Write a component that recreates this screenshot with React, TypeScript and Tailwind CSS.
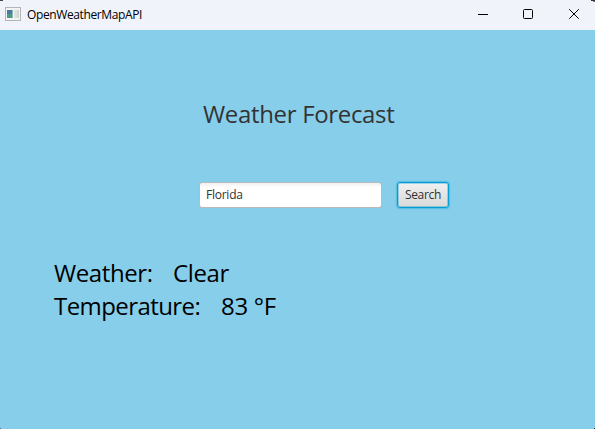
import React from 'react';

function AppIcon() {
  return (
    <svg width="16" height="14" viewBox="0 0 16 14" shapeRendering="crispEdges" className="mb-0.5 ml-[5px]">
      <rect x="0.5" y="0.5" width="15" height="13" fill="#f3f3f3" stroke="#b3b5bb" />
      <rect x="2" y="3" width="5" height="8" fill="#4a7aa0" />
      <rect x="2" y="7" width="5" height="4" fill="#4b9a85" />
      <rect x="7" y="3" width="1" height="8" fill="#8fb9b8" />
      <rect x="9" y="3" width="3" height="8" fill="#e0e2e2" />
      <rect x="12" y="3" width="2" height="8" fill="#d2d4d2" />
    </svg>
  );
}

function TitleBar() {
  return (
    <header className="flex h-[30px] items-center bg-[#f0f3f9]">
      <AppIcon />
      <h1 className="ml-1.5 flex-1 whitespace-nowrap text-[12px] leading-4 tracking-[-0.38px] text-black">OpenWeatherMapAPI</h1>
      <button aria-label="Minimize" className="flex h-full w-[46px] items-center justify-center pl-1.5">
        <svg width="10" height="10" shapeRendering="crispEdges"><path d="M0 4.5H10" stroke="#000" /></svg>
      </button>
      <button aria-label="Maximize" className="flex h-full w-[46px] items-center justify-center pl-1">
        <svg width="10" height="10" fill="none" className="mb-0.5"><rect x="0.5" y="0.5" width="9" height="9" rx="1" stroke="#000" /></svg>
      </button>
      <button aria-label="Close" className="flex h-full w-[46px] items-center justify-center pl-1">
        <svg width="10" height="10" fill="none" className="mb-0.5"><path d="M0.2 0.2L9.8 9.8M9.8 0.2L0.2 9.8" stroke="#000" /></svg>
      </button>
    </header>
  );
}

export default function App() {
  return (
    <div className="relative flex h-[429px] w-[595px] flex-col overflow-hidden bg-[#87ceeb] font-['Open_Sans','Noto_Sans',sans-serif]">
      <TitleBar />
      <main className="flex flex-col">
        <h2 className="ml-[203px] mt-[67px] h-[34px] whitespace-nowrap text-[24px] leading-[34px] tracking-[-0.33px] text-[#333333]">
          Weather Forecast
        </h2>
        <div className="ml-[199px] mt-[51px] flex h-[26px] gap-[15px]">
          <div className="flex h-[26px] w-[183px] items-center rounded-[3px] border border-[#bababa] bg-linear-to-b from-[#f1f1f1] to-white to-20% pl-1.5 text-[12px] leading-4 tracking-[-0.25px] text-[#323232]">
            <span>Florida</span>
          </div>
          <button className="flex h-[26px] w-[52px] items-center justify-center rounded-[3px] border border-[#039ed3] bg-linear-to-b from-[#f0f0f0] to-[#d9d9d9] text-[12px] leading-4 tracking-[-0.3px] text-[#323232] shadow-[0_0_1px_1px_rgba(3,158,211,0.35),inset_0_0_0_1px_rgba(3,158,211,0.35)]">
            Search
          </button>
        </div>
        <dl className="ml-[54px] mt-[48px] text-[24px] leading-[33px] tracking-[-0.4px] text-black">
          <div className="flex h-[33px] whitespace-nowrap">
            <dt className="w-[119px]">Weather:</dt>
            <dd>Clear</dd>
          </div>
          <div className="flex h-[33px] whitespace-nowrap">
            <dt className="w-[167px] tracking-[-0.58px]">Temperature:</dt>
            <dd className="tracking-[-0.3px]">83 °F</dd>
          </div>
        </dl>
      </main>
      <div className="absolute left-0 top-0 h-px w-[3px] bg-[#444444]" />
      <div className="absolute right-0 top-0 h-px w-[4px] bg-[#333333]" />
      <div className="absolute right-0 top-px h-px w-[2px] bg-[#77797d]" />
      <div className="absolute bottom-0 left-0 size-px bg-[#55717d]" />
      <div className="absolute bottom-0 right-0 size-px bg-[#333333]" />
    </div>
  );
}
